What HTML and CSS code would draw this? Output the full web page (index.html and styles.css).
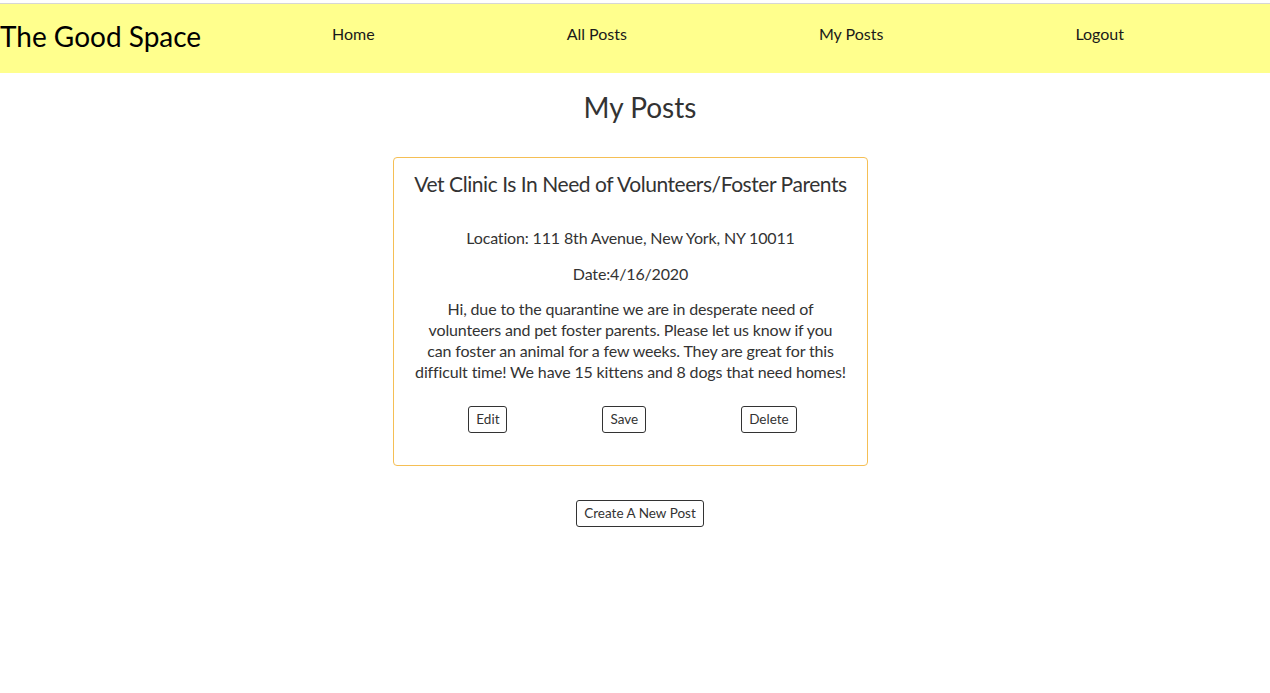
FILE: index.html
```html
<!DOCTYPE html>
<html lang="en">
<head>
<meta charset="utf-8">
<title>The Good Space</title>
<link rel="stylesheet" href="styles.css">
</head>
<body>
<nav class="navbar">
  <a class="brand" href="#">The Good Space</a>
  <ul class="nav-links">
    <li><a href="#">Home</a></li>
    <li><a href="#">All Posts</a></li>
    <li><a href="#">My Posts</a></li>
    <li><a href="#">Logout</a></li>
  </ul>
</nav>
<main class="content">
  <h2 class="page-title">My Posts</h2>
  <div class="post-card">
    <h3 class="post-title">Vet Clinic Is In Need of Volunteers/Foster Parents</h3>
    <p class="post-location">Location: 111 8th Avenue, New York, NY 10011</p>
    <p class="post-date">Date:4/16/2020</p>
    <p class="post-body">Hi, due to the quarantine we are in desperate need of<br>volunteers and pet foster parents. Please let us know if you<br>can foster an animal for a few weeks. They are great for this<br>difficult time! We have 15 kittens and 8 dogs that need homes!</p>
    <div class="post-actions">
      <button class="btn">Edit</button>
      <button class="btn">Save</button>
      <button class="btn">Delete</button>
    </div>
  </div>
  <div class="create-row">
    <button class="btn">Create A New Post</button>
  </div>
</main>
</body>
</html>
```
FILE: styles.css
```css
html, body {
  margin: 0;
  padding: 0;
  background: #fff;
}
body {
  padding-top: 3px;
  font-family: "Lato", "Open Sans", sans-serif;
  color: #333;
}
.navbar {
  display: flex;
  align-items: center;
  height: 69px;
  background: #ffff8d;
  border-top: 1px solid #d6d6d6;
}
.brand {
  font-size: 28px;
  color: #000;
  text-decoration: none;
  width: 200px;
  white-space: nowrap;
  margin-bottom: 6px;
}
.nav-links {
  display: flex;
  gap: 192px;
  list-style: none;
  margin: 0 0 10px 132px;
  padding: 0;
}
.nav-links a {
  font-size: 16px;
  color: #1a1a1a;
  text-decoration: none;
}
.content {
  display: flex;
  flex-direction: column;
  align-items: center;
  padding-left: 10px;
}
.page-title {
  margin: 17px 0 0;
  font-size: 28px;
  line-height: 34px;
  font-weight: 400;
  color: #333;
}
.post-card {
  align-self: flex-start;
  margin: 33px 0 0 383px;
  width: 437px;
  border: 1px solid #f5bf55;
  border-radius: 4px;
  padding: 13px 18px 32px;
  text-align: center;
}
.post-title {
  margin: 0;
  font-size: 21px;
  line-height: 26px;
  font-weight: 400;
  letter-spacing: -0.45px;
  white-space: nowrap;
}
.post-location, .post-date, .post-body {
  font-size: 16px;
  line-height: 21px;
  margin: 0;
  letter-spacing: -0.15px;
}
.post-body { white-space: nowrap; }
.post-location { margin-top: 30px; }
.post-date { margin-top: 15px; }
.post-body { margin-top: 14px; }
.post-actions {
  display: flex;
  justify-content: center;
  gap: 95px;
  margin-top: 24px;
  padding-left: 4px;
}
.btn {
  font-family: inherit;
  font-size: 13.5px;
  line-height: 17px;
  color: #333;
  background: #fff;
  border: 1px solid #333;
  border-radius: 3px;
  padding: 4px 7px;
  cursor: pointer;
}
.create-row {
  margin-top: 34px;
}
```
